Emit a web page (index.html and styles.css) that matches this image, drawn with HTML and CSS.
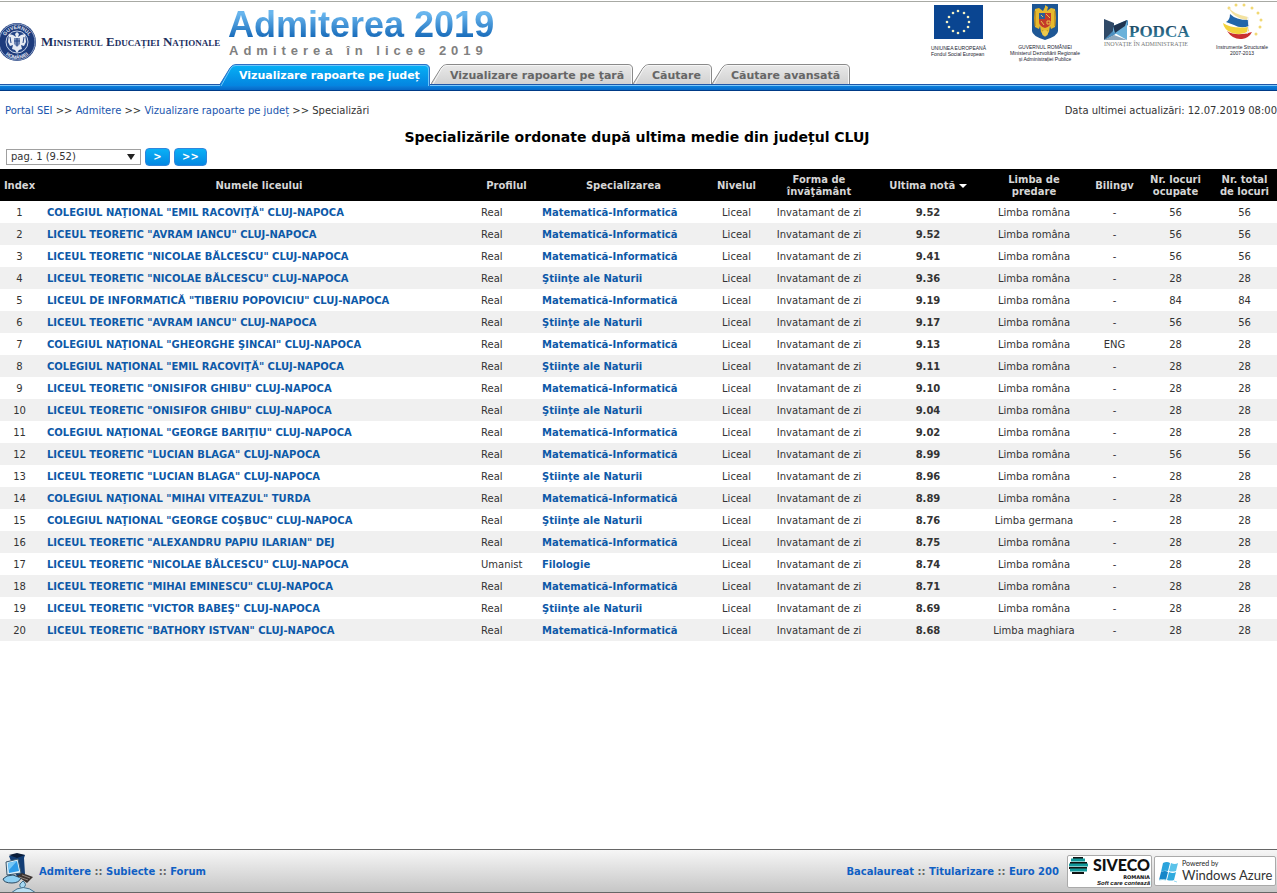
FILE: index.html
```
<!DOCTYPE html>
<html lang="ro">
<head>
  <meta charset="UTF-8">
  <meta name="viewport" content="width=device-width, initial-scale=1.0">
  <title>Admiterea 2019 - Specializări</title>
  <link rel="stylesheet" href="styles.css">
</head>
<body>
  <header class="header">
    <div class="ministry">
      <svg width="37" height="40" viewBox="0 0 37 40">
        <circle cx="17" cy="20" r="19" fill="#1d3b7c"/>
        <circle cx="17" cy="20" r="18" fill="none" stroke="#8fa3c9" stroke-width="1"/>
        <circle cx="17" cy="20" r="11" fill="#234486" stroke="#c4cfe4" stroke-width="1"/>
        <path id="arc-top" d="M4 20a13 13 0 0 1 26 0" fill="none"/>
        <path id="arc-bottom" d="M0 20a17 17 0 0 0 34 0" fill="none"/>
        <text class="seal"><textPath href="#arc-top" startOffset="50%" text-anchor="middle">GUVERNUL</textPath></text>
        <text class="seal"><textPath href="#arc-bottom" startOffset="50%" text-anchor="middle">ROMÂNIEI</textPath></text>
        <path d="M17 10l2 2-1 3 3-2 4-1 1 8-2 4-3-1 1 4-3 1-2 3-2-3-3-1 1-4-3 1-2-4 1-8 4 1 3 2-1-3z" fill="#e6ebf3"/>
        <path d="M14 16h6v6l-3 3-3-3z" fill="#7389b5"/>
        <path d="M17 16v8M14 19h6M10 15l1 6M24 15l-1 6" stroke="#234486" stroke-width="1"/>
      </svg>
      <span class="ministry-name">Ministerul Educației Naționale</span>
    </div>

    <div class="heading">
      <h1>Admiterea 2019</h1>
      <p class="subtitle">Admiterea în licee 2019</p>
      <nav class="tabs">
        <a href="#" class="tab tab-county active">
          <svg width="211" height="22" viewBox="0 0 211 22">
            <defs>
              <linearGradient id="tab-blue" x2="0" y2="1"><stop offset="0" stop-color="#06b2f6"/><stop offset="1" stop-color="#0484e0"/></linearGradient>
              <linearGradient id="tab-grey" x2="0" y2="1"><stop offset="0" stop-color="#e9e9e9"/><stop offset="1" stop-color="#d2d2d2"/></linearGradient>
            </defs>
            <path d="M-1 22L10 4Q12 .5 16 .5H205Q209.500 .5 209.500 5V22" fill="url(#tab-blue)" stroke="#2f6fc4"/>
            <path d="M1 22L11 4Q13 1.500 16 1.500H205Q208.500 1.500 208.500 5V22" fill="none" stroke="#6cc6fa"/>
          </svg>
          <span>Vizualizare rapoarte pe județ</span>
        </a>
        <a href="#" class="tab tab-country">
          <svg width="202" height="20" viewBox="0 0 202 20">
            <path d="M0 20L10 4Q12 .5 16 .5H197Q201.500 .5 201.500 5V20" fill="url(#tab-grey)" stroke="#8a8a8a"/>
            <path d="M2 20L11 4Q13 1.500 16 1.500H197Q200.500 1.500 200.500 5V20" fill="none" stroke="#f6f6f6"/>
          </svg>
          <span>Vizualizare rapoarte pe ţară</span>
        </a>
        <a href="#" class="tab tab-search">
          <svg width="79" height="20" viewBox="0 0 79 20">
            <path d="M0 20L10 4Q12 .5 16 .5H74Q78.500 .5 78.500 5V20" fill="url(#tab-grey)" stroke="#8a8a8a"/>
            <path d="M2 20L11 4Q13 1.500 16 1.500H74Q77.500 1.500 77.500 5V20" fill="none" stroke="#f6f6f6"/>
          </svg>
          <span>Căutare</span>
        </a>
        <a href="#" class="tab tab-advanced">
          <svg width="138" height="20" viewBox="0 0 138 20">
            <path d="M0 20L10 4Q12 .5 16 .5H133Q137.500 .5 137.500 5V20" fill="url(#tab-grey)" stroke="#8a8a8a"/>
            <path d="M2 20L11 4Q13 1.500 16 1.500H133Q136.500 1.500 136.500 5V20" fill="none" stroke="#f6f6f6"/>
          </svg>
          <span>Căutare avansată</span>
        </a>
      </nav>
    </div>

    <div class="partners">
      <svg width="58" height="60" viewBox="0 0 58 60">
        <rect x="5" y="3" width="49" height="34" fill="#0a4591"/>
        <g fill="#f4f1c4">
          <circle cx="29" cy="9" r="1.300"/><circle cx="35" cy="11" r="1.300"/><circle cx="39" cy="15" r="1.300"/>
          <circle cx="40" cy="20" r="1.300"/><circle cx="39" cy="25" r="1.300"/><circle cx="35" cy="29" r="1.300"/>
          <circle cx="29" cy="31" r="1.300"/><circle cx="24" cy="29" r="1.300"/><circle cx="20" cy="25" r="1.300"/>
          <circle cx="18" cy="20" r="1.300"/><circle cx="20" cy="15" r="1.300"/><circle cx="24" cy="11" r="1.300"/>
        </g>
        <text x="2" y="48" class="caption">UNIUNEA EUROPEANĂ</text>
        <text x="2" y="54" class="caption">Fondul Social European</text>
      </svg>
      <svg width="72" height="60" viewBox="-1 0 72 60">
        <path d="M22 2H48V29Q48 34 35 38Q22 34 22 29z" fill="#1e5795"/>
        <path d="M35 3l3 2-1 4 4-3 4 1 1 9-1 9-4 2-1-3-1 6-4 5-4-5-1-6-1 3-4-2-1-9 1-9 4-1 4 3 2-4z" fill="#e6b92e"/>
        <path d="M29 11h12v9q0 4-6 6q-6-2-6-6z" fill="#c33a2a"/>
        <path d="M29 11h6v6h-6z" fill="#2e5d97"/>
        <path d="M36 12l4 4M31 19l3 4M37 19h3v3h-3zM31 13l2 2" stroke="#e8c44a" stroke-width="1" fill="none"/>
        <path d="M25 9v15M45 9v15M32 29h6" stroke="#a87816" stroke-width="1"/>
        <circle cx="35" cy="31" r="3" fill="#edca4c"/>
        <g text-anchor="middle">
          <text x="35" y="47" class="caption">GUVERNUL ROMÂNIEI</text>
          <text x="35" y="53" class="caption">Ministerul Dezvoltării Regionale</text>
          <text x="35" y="59" class="caption">și Administrației Publice</text>
        </g>
      </svg>
      <svg width="90" height="60" viewBox="0 0 90 60">
        <defs><linearGradient id="podca" x2="0" y2="1"><stop offset="0" stop-color="#16354f"/><stop offset="1" stop-color="#3b93b4"/></linearGradient></defs>
        <path d="M1 17l10 4v12l-10 5z" fill="#304a68"/>
        <path d="M1 38l10-10 14-10v5L11 33z" fill="#4b8fc0"/>
        <path d="M10 24l14-6v20L10 30z" fill="#6ab1da"/>
        <path d="M10 24l14-6-2 6-10 7z" fill="#1e3450"/>
        <path d="M1 38l10-5 13 5z" fill="#8ea9bf"/>
        <text x="26" y="35" class="podca-name">PODCA</text>
        <text x="1" y="44" class="podca-motto">INOVAȚIE ÎN ADMINISTRAȚIE</text>
      </svg>
      <svg width="54" height="60" viewBox="0 0 54 60">
        <g fill="#f1d873">
          <circle cx="14" cy="6" r="1.500"/><circle cx="21" cy="3" r="1.500"/><circle cx="29" cy="3" r="1.500"/>
          <circle cx="37" cy="6" r="1.500"/><circle cx="43" cy="11" r="1.500"/><circle cx="46" cy="18" r="1.500"/>
          <circle cx="45" cy="25" r="1.500"/><circle cx="41" cy="32" r="1.500"/>
        </g>
        <path d="M13 4q4 8 20 11l-1 3q-15-2-19-14z" fill="#f3e2a0"/>
        <path d="M15 12q6 6 18 6l1 6q-8 3-15-1l-8-3q4-2 4-8z" fill="#2266a9"/>
        <path d="M8 21q9 6 25 4l1 4q-8 5-17 2-8-3-9-10z" fill="#f3d33c"/>
        <path d="M12 29q9 6 25 1-3 6-10 7-9 1-15-8z" fill="#c92f30"/>
        <path d="M33 15q2 9-1 17" fill="none" stroke="#e9eef5" stroke-width="1"/>
        <g text-anchor="middle">
          <text x="27" y="47" class="caption">Instrumente Structurale</text>
          <text x="27" y="53" class="caption">2007-2013</text>
        </g>
      </svg>
    </div>
  </header>

  <main class="content">
    <div class="info">
      <div class="breadcrumbs">
        <a href="#">Portal SEI</a> &gt;&gt; <a href="#">Admitere</a> &gt;&gt; <a href="#">Vizualizare rapoarte pe județ</a> &gt;&gt; Specializări
      </div>
      <div class="updated">Data ultimei actualizări: 12.07.2019 08:00</div>
    </div>

    <h2>Specializările ordonate după ultima medie din județul CLUJ</h2>

    <form class="pager">
      <div class="select-wrap">
        <select aria-label="Pagina">
          <option>pag. 1 (9.52)</option>
        </select>
      </div>
      <button type="button">&gt;</button>
      <button type="button">&gt;&gt;</button>
    </form>

    <table class="results">
      <colgroup>
        <col class="w-index"><col><col class="w-profile"><col class="w-spec"><col class="w-level"><col class="w-form"><col class="w-grade"><col class="w-lang"><col class="w-bilingual"><col class="w-taken"><col class="w-total">
      </colgroup>
      <thead>
        <tr>
          <th>Index</th>
          <th>Numele liceului</th>
          <th>Profilul</th>
          <th>Specializarea</th>
          <th>Nivelul</th>
          <th>Forma de<br>învăţământ</th>
          <th>Ultima notă <span class="sort"></span></th>
          <th>Limba de<br>predare</th>
          <th>Bilingv</th>
          <th>Nr. locuri<br>ocupate</th>
          <th>Nr. total<br>de locuri</th>
        </tr>
      </thead>
      <tbody>
        <tr><td>1</td><td><a href="#">COLEGIUL NAŢIONAL "EMIL RACOVIŢĂ" CLUJ-NAPOCA</a></td><td>Real</td><td><a href="#">Matematică-Informatică</a></td><td>Liceal</td><td>Invatamant de zi</td><td>9.52</td><td>Limba româna</td><td>-</td><td>56</td><td>56</td></tr>
        <tr><td>2</td><td><a href="#">LICEUL TEORETIC "AVRAM IANCU" CLUJ-NAPOCA</a></td><td>Real</td><td><a href="#">Matematică-Informatică</a></td><td>Liceal</td><td>Invatamant de zi</td><td>9.52</td><td>Limba româna</td><td>-</td><td>56</td><td>56</td></tr>
        <tr><td>3</td><td><a href="#">LICEUL TEORETIC "NICOLAE BĂLCESCU" CLUJ-NAPOCA</a></td><td>Real</td><td><a href="#">Matematică-Informatică</a></td><td>Liceal</td><td>Invatamant de zi</td><td>9.41</td><td>Limba româna</td><td>-</td><td>56</td><td>56</td></tr>
        <tr><td>4</td><td><a href="#">LICEUL TEORETIC "NICOLAE BĂLCESCU" CLUJ-NAPOCA</a></td><td>Real</td><td><a href="#">Ştiinţe ale Naturii</a></td><td>Liceal</td><td>Invatamant de zi</td><td>9.36</td><td>Limba româna</td><td>-</td><td>28</td><td>28</td></tr>
        <tr><td>5</td><td><a href="#">LICEUL DE INFORMATICĂ "TIBERIU POPOVICIU" CLUJ-NAPOCA</a></td><td>Real</td><td><a href="#">Matematică-Informatică</a></td><td>Liceal</td><td>Invatamant de zi</td><td>9.19</td><td>Limba româna</td><td>-</td><td>84</td><td>84</td></tr>
        <tr><td>6</td><td><a href="#">LICEUL TEORETIC "AVRAM IANCU" CLUJ-NAPOCA</a></td><td>Real</td><td><a href="#">Ştiinţe ale Naturii</a></td><td>Liceal</td><td>Invatamant de zi</td><td>9.17</td><td>Limba româna</td><td>-</td><td>56</td><td>56</td></tr>
        <tr><td>7</td><td><a href="#">COLEGIUL NAŢIONAL "GHEORGHE ŞINCAI" CLUJ-NAPOCA</a></td><td>Real</td><td><a href="#">Matematică-Informatică</a></td><td>Liceal</td><td>Invatamant de zi</td><td>9.13</td><td>Limba româna</td><td>ENG</td><td>28</td><td>28</td></tr>
        <tr><td>8</td><td><a href="#">COLEGIUL NAŢIONAL "EMIL RACOVIŢĂ" CLUJ-NAPOCA</a></td><td>Real</td><td><a href="#">Ştiinţe ale Naturii</a></td><td>Liceal</td><td>Invatamant de zi</td><td>9.11</td><td>Limba româna</td><td>-</td><td>28</td><td>28</td></tr>
        <tr><td>9</td><td><a href="#">LICEUL TEORETIC "ONISIFOR GHIBU" CLUJ-NAPOCA</a></td><td>Real</td><td><a href="#">Matematică-Informatică</a></td><td>Liceal</td><td>Invatamant de zi</td><td>9.10</td><td>Limba româna</td><td>-</td><td>28</td><td>28</td></tr>
        <tr><td>10</td><td><a href="#">LICEUL TEORETIC "ONISIFOR GHIBU" CLUJ-NAPOCA</a></td><td>Real</td><td><a href="#">Ştiinţe ale Naturii</a></td><td>Liceal</td><td>Invatamant de zi</td><td>9.04</td><td>Limba româna</td><td>-</td><td>28</td><td>28</td></tr>
        <tr><td>11</td><td><a href="#">COLEGIUL NAŢIONAL "GEORGE BARIŢIU" CLUJ-NAPOCA</a></td><td>Real</td><td><a href="#">Matematică-Informatică</a></td><td>Liceal</td><td>Invatamant de zi</td><td>9.02</td><td>Limba româna</td><td>-</td><td>28</td><td>28</td></tr>
        <tr><td>12</td><td><a href="#">LICEUL TEORETIC "LUCIAN BLAGA" CLUJ-NAPOCA</a></td><td>Real</td><td><a href="#">Matematică-Informatică</a></td><td>Liceal</td><td>Invatamant de zi</td><td>8.99</td><td>Limba româna</td><td>-</td><td>56</td><td>56</td></tr>
        <tr><td>13</td><td><a href="#">LICEUL TEORETIC "LUCIAN BLAGA" CLUJ-NAPOCA</a></td><td>Real</td><td><a href="#">Ştiinţe ale Naturii</a></td><td>Liceal</td><td>Invatamant de zi</td><td>8.96</td><td>Limba româna</td><td>-</td><td>28</td><td>28</td></tr>
        <tr><td>14</td><td><a href="#">COLEGIUL NAŢIONAL "MIHAI VITEAZUL" TURDA</a></td><td>Real</td><td><a href="#">Matematică-Informatică</a></td><td>Liceal</td><td>Invatamant de zi</td><td>8.89</td><td>Limba româna</td><td>-</td><td>28</td><td>28</td></tr>
        <tr><td>15</td><td><a href="#">COLEGIUL NAŢIONAL "GEORGE COŞBUC" CLUJ-NAPOCA</a></td><td>Real</td><td><a href="#">Ştiinţe ale Naturii</a></td><td>Liceal</td><td>Invatamant de zi</td><td>8.76</td><td>Limba germana</td><td>-</td><td>28</td><td>28</td></tr>
        <tr><td>16</td><td><a href="#">LICEUL TEORETIC "ALEXANDRU PAPIU ILARIAN" DEJ</a></td><td>Real</td><td><a href="#">Matematică-Informatică</a></td><td>Liceal</td><td>Invatamant de zi</td><td>8.75</td><td>Limba româna</td><td>-</td><td>28</td><td>28</td></tr>
        <tr><td>17</td><td><a href="#">LICEUL TEORETIC "NICOLAE BĂLCESCU" CLUJ-NAPOCA</a></td><td>Umanist</td><td><a href="#">Filologie</a></td><td>Liceal</td><td>Invatamant de zi</td><td>8.74</td><td>Limba româna</td><td>-</td><td>28</td><td>28</td></tr>
        <tr><td>18</td><td><a href="#">LICEUL TEORETIC "MIHAI EMINESCU" CLUJ-NAPOCA</a></td><td>Real</td><td><a href="#">Matematică-Informatică</a></td><td>Liceal</td><td>Invatamant de zi</td><td>8.71</td><td>Limba româna</td><td>-</td><td>28</td><td>28</td></tr>
        <tr><td>19</td><td><a href="#">LICEUL TEORETIC "VICTOR BABEŞ" CLUJ-NAPOCA</a></td><td>Real</td><td><a href="#">Ştiinţe ale Naturii</a></td><td>Liceal</td><td>Invatamant de zi</td><td>8.69</td><td>Limba româna</td><td>-</td><td>28</td><td>28</td></tr>
        <tr><td>20</td><td><a href="#">LICEUL TEORETIC "BATHORY ISTVAN" CLUJ-NAPOCA</a></td><td>Real</td><td><a href="#">Matematică-Informatică</a></td><td>Liceal</td><td>Invatamant de zi</td><td>8.68</td><td>Limba maghiara</td><td>-</td><td>28</td><td>28</td></tr>
      </tbody>
    </table>
  </main>

  <footer class="footer">
    <svg width="39" height="42" viewBox="0 0 39 42">
      <path d="M9 6l7-2 9 1-1 3 1 16-8 3z" fill="#123d74"/>
      <path d="M9 5l8-2 8 2-8 3z" fill="#0a1c38"/>
      <path d="M6 12l12-3 3 14-14 2z" fill="#d9eef9" stroke="#39566c"/>
      <path d="M8 13l9-2 2 10-10 2z" fill="#2d9be8"/>
      <path d="M8 13l9-2-8 9z" fill="#78c8f6"/>
      <path d="M3 29q3-4 10-4l8 3q-2 5-9 5-8 0-9-4z" fill="#8fd0f3" stroke="#2a4a62"/>
      <path d="M17 26l5-3 11 4-6 6z" fill="#3b3330"/>
      <path d="M19 27l9 3M22 25l8 3" stroke="#8e8680"/>
      <path d="M23 31q5 4 0 7-4 0-3-4z" fill="#a6d8f2" stroke="#3d708e"/>
      <path d="M11 43q12-11 25 0z" fill="#b9dff2" stroke="#44708d"/>
    </svg>
    <div class="links">
      <a href="#">Admitere</a> :: <a href="#">Subiecte</a> :: <a href="#">Forum</a>
    </div>
    <div class="links links-right">
      <a href="#">Bacalaureat</a> :: <a href="#">Titularizare</a> :: <a href="#">Euro 200</a>
    </div>
    <a href="#" class="badge" aria-label="Siveco">
      <svg width="83" height="31" viewBox="0 0 83 31">
        <path d="M5 2h10M2 7h17M1 12h18M4 17h12" stroke="#111" stroke-width="2"/>
        <path d="M3 4h14M1 9h19M2 14h17" stroke="#12999a" stroke-width="3"/>
        <text x="82" y="15" text-anchor="end" class="siveco-name">SIVECO</text>
        <text x="82" y="23" text-anchor="end" class="siveco-country">ROMANIA</text>
        <text x="82" y="29" text-anchor="end" class="siveco-motto">Soft care contează</text>
      </svg>
    </a>
    <a href="#" class="badge" aria-label="Windows Azure">
      <svg width="120" height="28" viewBox="0 0 120 28">
        <path d="M8 6q4-2 7 0l-2 8q-4-1-7 1z" fill="#2aa3dc"/>
        <path d="M16 6q4 2 7 0l-2 8q-4 1-7 0z" fill="#5cc3ea"/>
        <path d="M6 15q4-2 7 0l-2 8q-4-2-7 0z" fill="#1687c9"/>
        <path d="M14 15q4 2 7 0l-2 8q-3 1-7 0z" fill="#30aade"/>
        <path d="M4 23q4-1 7 0M19 24l3 1" stroke="#9bdcf3"/>
        <text x="27" y="9" class="azure-powered">Powered by</text>
        <text x="27" y="23" class="azure-name">Windows Azure</text>
      </svg>
    </a>
  </footer>
</body>
</html>
```
FILE: styles.css
```
body {
  margin: 0;
  min-height: 100vh;
  display: flex;
  flex-direction: column;
  background-color: #fff;
  color: #333;
  font-family: Verdana, "DejaVu Sans", sans-serif;
  font-size: 10px;
  line-height: 12px;
}

a {
  color: #1a56ae;
  text-decoration: none;
}

a:hover {
  text-decoration: underline;
}

svg {
  display: block;
  flex-shrink: 0;
}

/* header */
.header {
  display: flex;
  margin-top: 1px;
  padding-bottom: 6px;
  border-top: 1px solid #a8aaa4;
  border-bottom: 1px solid #003a86;
  background: linear-gradient(#1f57a8 1px, #7cc8fa 1px, #7cc8fa 2px, #0a80dc 2px, #0668c8) bottom / 100% 6px no-repeat;
}

.ministry {
  display: flex;
  align-items: center;
  gap: 4px;
  width: 220px;
  height: 80px;
}

.ministry-name {
  color: #1c2f5e;
  font-family: "Liberation Serif", serif;
  font-size: 13px;
  font-weight: bold;
  font-variant: small-caps;
  white-space: nowrap;
}

.seal {
  fill: #e3e9f4;
  font: bold 5px "Liberation Sans", sans-serif;
}

.heading {
  flex: 1;
}

h1 {
  margin: 4px 0 0 8px;
  width: max-content;
  background: linear-gradient(#69b6ee 20%, #1468b8 85%);
  -webkit-background-clip: text;
  background-clip: text;
  color: transparent;
  font: bold 36px/38px "Liberation Sans", sans-serif;
}

.subtitle {
  margin: 0 0 6px 9px;
  color: #808080;
  font: bold 13px/14px "Liberation Sans", sans-serif;
  letter-spacing: 5px;
  white-space: nowrap;
}

.tabs {
  display: flex;
  height: 20px;
}

.tab {
  position: relative;
  box-sizing: border-box;
  height: 20px;
  padding-left: 19px;
  color: #666;
  font-size: 11px;
  font-weight: bold;
  line-height: 24px;
  white-space: nowrap;
}

.tab svg {
  position: absolute;
  left: 0;
  top: 0;
}

.tab span {
  position: relative;
}

.tab.active {
  color: #fff;
}

.tab-county { width: 211px; }
.tab-country { width: 202px; }
.tab-search { width: 79px; }
.tab-advanced { width: 138px; }

.partners {
  display: flex;
  gap: 22px;
  padding-right: 8px;
}

.caption {
  fill: #1a2330;
  font: 5px "Liberation Sans", sans-serif;
}

.podca-name {
  fill: url(#podca);
  font: bold 17px "Liberation Serif", serif;
}

.podca-motto {
  fill: #777;
  font: 6px "Liberation Serif", serif;
}

/* content */
.content {
  flex: 1;
}

.info {
  display: flex;
  justify-content: space-between;
  padding: 14px 0 0 5px;
}

h2 {
  margin: 12px 3px 3px 0;
  color: #000;
  font-size: 14px;
  line-height: 16px;
  text-align: center;
}

.pager {
  display: flex;
  align-items: center;
  gap: 4px;
  margin: 0 6px 3px;
}

.select-wrap {
  position: relative;
}

.select-wrap::after {
  content: "";
  position: absolute;
  right: 6px;
  top: 5px;
  border: 4px solid transparent;
  border-top: 6px solid #222;
  border-bottom: 0;
  pointer-events: none;
}

.pager select {
  appearance: none;
  display: block;
  width: 135px;
  height: 16px;
  padding: 0 4px;
  border: 1px solid #a0a0a0;
  background-color: #fff;
  color: #333;
  font: 10px/14px Verdana, "DejaVu Sans", sans-serif;
}

.pager button {
  min-width: 25px;
  height: 18px;
  padding: 0 7px;
  border: 1px solid #2f86dc;
  border-radius: 4px;
  background: linear-gradient(#0ab0f6, #0488e2);
  color: #fff;
  font: bold 10px/14px Verdana, "DejaVu Sans", sans-serif;
  cursor: pointer;
}

.results {
  width: 100%;
  table-layout: fixed;
  border-collapse: collapse;
}

.w-index { width: 39px; }
.w-profile { width: 55px; }
.w-spec { width: 179px; }
.w-level { width: 47px; }
.w-form { width: 118px; }
.w-grade { width: 100px; }
.w-lang { width: 112px; }
.w-bilingual { width: 49px; }
.w-taken { width: 73px; }
.w-total { width: 65px; }

.results th {
  height: 30px;
  padding: 2px 0 0;
  background-color: #000;
  color: #d6d6d6;
  white-space: nowrap;
}

.results td {
  height: 20px;
  padding: 2px 0 0;
  text-align: center;
  white-space: nowrap;
}

.results tbody tr:nth-child(even) {
  background-color: #f0f0f0;
}

.results td:nth-child(2),
.results td:nth-child(4) {
  padding-left: 8px;
  text-align: left;
}

.results td:nth-child(3) {
  padding-left: 2px;
  text-align: left;
}

.results td:nth-child(7) {
  font-weight: bold;
}

.results a {
  color: #0d59a8;
  font-weight: bold;
}

.sort {
  display: inline-block;
  border: 4px solid transparent;
  border-top-color: #fff;
  border-bottom: 0;
  vertical-align: 1px;
}

/* footer */
.footer {
  display: flex;
  align-items: center;
  gap: 2px;
  height: 42px;
  padding-right: 1px;
  border-top: 1px solid #666;
  border-bottom: 1px solid #666;
  background: linear-gradient(#f6f6f6, #c6c6c6);
}

.links {
  margin-left: -2px;
  padding-top: 2px;
  color: #666;
  font-weight: bold;
  white-space: nowrap;
}

.links a {
  color: #1060c4;
}

.links-right {
  margin-left: auto;
  margin-right: 6px;
}

.badge {
  border: 1px solid #aaa;
  border-radius: 2px;
  background-color: #fff;
}

.siveco-name {
  fill: #111;
  font: 900 16px Lato, sans-serif;
}

.siveco-country {
  fill: #111;
  font: bold 5px "DejaVu Sans", sans-serif;
}

.siveco-motto {
  fill: #111;
  font: italic bold 6px "Liberation Sans", sans-serif;
}

.azure-powered {
  fill: #222;
  font: 7px Lato, sans-serif;
}

.azure-name {
  fill: #333;
  font: 13px Lato, sans-serif;
}
```
